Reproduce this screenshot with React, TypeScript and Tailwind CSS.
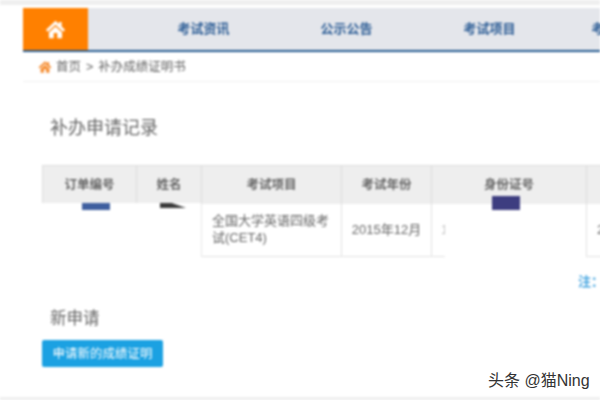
import React from 'react';

const font = "font-['Liberation_Sans','Noto_Sans_CJK_SC',sans-serif]";

const navItems = [
    { title: '考试资讯', width: 'w-[143px]' },
    { title: '公示公告', width: 'w-[143px]' },
    { title: '考试项目', width: 'w-[143px]' },
    { title: '考试项目', width: 'w-[113px]' },
];

const columns = [
    { title: '订单编号', width: 'w-[94px]' },
    { title: '姓名', width: 'w-[65px]' },
    { title: '考试项目', width: 'w-[140px]' },
    { title: '考试年份', width: 'w-[90px]' },
    { title: '身份证号', width: 'w-[155px]' },
    { title: '', width: 'w-[80px]' },
];

const HomeIcon = ({ className }: { className: string }) => (
    <svg viewBox="0 0 24 24" className={className} fill="currentColor">
        <path d="M12 2 L1 12.5 L3.5 14.5 L12 6.5 L20.500 14.5 L23 12.5 L19 8.700 V3.500 H16 V5.800 Z" />
        <path d="M12 8.500 L4.500 15.500 V22 H10 V16 H14 V22 H19.500 V15.500 Z" />
    </svg>
);

const App = () => {
    return (
        <div className={`relative w-[600px] h-[400px] overflow-hidden bg-white ${font}`}>
            <div className="blur-[0.8px] h-full flex flex-col">
                <div className="h-[5px] shrink-0 bg-[#efefef]" />
                <nav className="ml-[23px] mt-[3px] h-[44px] shrink-0 flex bg-[#e4e6eb] border-b-2 border-[#23598f]">
                    <div className="w-[65px] shrink-0 bg-[#ff8000] flex items-center justify-center text-white">
                        <HomeIcon className="w-[21px] h-[21px]" />
                    </div>
                    <div className="flex pl-[44px]">
                        {navItems.map((item, i) => (
                            <div key={i} className={`${item.width} shrink-0 flex items-center justify-center text-[13px] font-bold text-[#2f5f97]`}>
                                {item.title}
                            </div>
                        ))}
                    </div>
                </nav>
                <div className="ml-[23px] h-[30px] shrink-0 flex items-center gap-[4px] pl-[15px] pt-[1px] border-b border-[#f0f0f0] text-[12.5px] text-[#666]">
                    <HomeIcon className="w-[14px] h-[14px] text-[#f58a2c]" />
                    <span>首页</span>
                    <span className="mx-[1px]">&gt;</span>
                    <span>补办成绩证明书</span>
                </div>
                <main className="flex-1 flex flex-col pl-[42px]">
                    <h2 className="mt-[34px] ml-[8px] text-[18px] leading-[24px] text-[#666]">补办申请记录</h2>
                    <div className="relative mt-[25px] w-[624px] shrink-0">
                        <table className="table-fixed border-collapse w-[624px]">
                            <thead>
                                <tr className="h-[38px] bg-[#eeeeee] border-t border-[#dedede]">
                                    {columns.map((col, i) => (
                                        <th key={i} className={`${col.width} border-l border-[#dcdcdc] pt-[2px] text-[12.5px] font-bold text-[#666]`}>
                                            {col.title}
                                        </th>
                                    ))}
                                </tr>
                            </thead>
                            <tbody>
                                <tr className="h-[53px] border-b border-[#e2e2e2] text-[13px] text-[#666]">
                                    <td />
                                    <td />
                                    <td className="border-l border-[#e8e8e8] pl-[10px] pr-[8px] pb-[1px] leading-[17px]">全国大学英语四级考试(CET4)</td>
                                    <td className="border-l border-[#e2e2e2] text-center">2015年12月</td>
                                    <td className="border-l border-[#e2e2e2] pl-[9px] text-[#bbb]">1</td>
                                    <td className="border-l border-[#e2e2e2] pl-[10px]">2</td>
                                </tr>
                            </tbody>
                        </table>
                        {/* redaction patches lying over the table */}
                        <div className="absolute left-0 top-[38px] w-[159px] h-[54px] bg-white" />
                        <div className="absolute left-[40px] top-[38px] w-[28px] h-[7px] bg-[#3f5f9f]" />
                        <div className="absolute left-[118px] top-[38px] w-[26px] h-[5px] bg-[#3a3a3a] [clip-path:polygon(0_0,45%_0,100%_100%,0_100%)]" />
                        <div className="absolute left-[403px] top-[45px] w-[141px] h-[50px] bg-white" />
                        <div className="absolute left-[450px] top-[31px] w-[28px] h-[14px] bg-[#3d3d80]" />
                    </div>
                    <div className="mt-[16px] ml-[536px] w-[60px] text-[13px] leading-[18px] font-bold text-[#45a5e0] whitespace-nowrap">注：</div>
                    <h3 className="mt-[16px] ml-[8px] text-[16.500px] leading-[22px] text-[#666]">新申请</h3>
                    <button className="mt-[11px] w-[121px] h-[27px] pt-[1px] rounded-[2px] bg-[#1ba1e2] text-white text-[12.500px]">申请新的成绩证明</button>
                </main>
                <div className="h-[3px] shrink-0 bg-[#efefef]" />
            </div>
            <div className="absolute left-[488px] top-[372px] text-[16px] leading-[18px] text-[#333] font-['Liberation_Sans','Noto_Sans_CJK_SC',sans-serif]">头条 @猫Ning</div>
        </div>
    );
};

export default App;
